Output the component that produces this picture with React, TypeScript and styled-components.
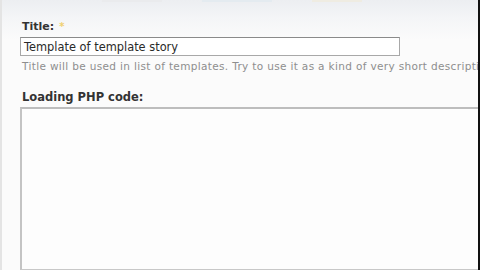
import React from "react";
import styled, { createGlobalStyle } from "styled-components";

const Global = createGlobalStyle`
  html, body { margin: 0; padding: 0; background: #fbfbfb; overflow: hidden; }
  * { box-sizing: border-box; }
`;

const Page = styled.div`
  width: 480px;
  height: 270px;
  overflow: hidden;
  display: flex;
  font-family: "DejaVu Sans", Verdana, sans-serif;
`;

const LeftEdge = styled.div`
  width: 2px;
  flex: none;
  background: #e4e4e4;
`;

const RightEdge = styled.div`
  width: 2px;
  flex: none;
  background: #111;
`;

const Content = styled.div`
  flex: 1;
  min-width: 0;
  overflow: hidden;
  background: linear-gradient(#eceef1 0px, #f4f5f7 18px, #fbfbfb 40px);
  display: flex;
  flex-direction: column;
`;

const TopStrip = styled.div`
  height: 5px;
  display: flex;
  gap: 40px;
  padding-left: 100px;
  flex: none;
`;

const TopMark = styled.div<{ $w: number; $tint: string }>`
  width: ${(p) => p.$w}px;
  height: 2px;
  background: ${(p) => p.$tint};
`;

const Form = styled.div`
  padding: 15px 0 0 18px;
  display: flex;
  flex-direction: column;
  flex: 1;
  min-height: 0;
`;

const Label = styled.label`
  font-size: 11px;
  font-weight: bold;
  color: #333;
  line-height: 14px;
  padding-left: 2px;
  display: flex;
  align-items: flex-start;
  gap: 5px;
`;

const WideLabel = styled(Label)`
  font-size: 11.5px;
`;

const Req = styled.span`
  color: #f0d070;
  font-size: 10px;
  font-weight: bold;
`;

const TextInput = styled.div`
  margin-top: 3px;
  width: 380px;
  height: 19px;
  border: 1px solid #a8a8a8;
  border-top-color: #8a8a8a;
  background: #fff;
  font-size: 11.4px;
  color: #2a2a2a;
  line-height: 18px;
  padding-left: 3px;
  white-space: nowrap;
`;

const Help = styled.div`
  margin-top: 4px;
  font-size: 10.5px;
  color: #8e8e8e;
  line-height: 12px;
  padding-left: 2px;
  white-space: nowrap;
  letter-spacing: 0.34px;
  overflow: hidden;
`;

const Spacer = styled.div<{ $h: number }>`
  height: ${(p) => p.$h}px;
  flex: none;
`;

const TextArea = styled.div`
  margin-top: 3px;
  flex: 1;
  margin-right: -10px;
  border: 1px solid #c8c8c8;
  border-top: 2px solid #bdbdbd;
  border-left: 2px solid #c4c4c4;
  background: #fdfdfd;
`;

export default function App() {
  return (
    <>
      <Global />
      <Page>
        <LeftEdge />
        <Content>
          <TopStrip>
            <TopMark $w={60} $tint="#eaebed" />
            <TopMark $w={70} $tint="#e4ebf0" />
            <TopMark $w={50} $tint="#efece2" />
          </TopStrip>
          <Form>
            <Label>
              Title: <Req>*</Req>
            </Label>
            <TextInput>Template of template story</TextInput>
            <Help>
              Title will be used in list of templates. Try to use it as a kind of very short descripti
            </Help>
            <Spacer $h={18} />
            <WideLabel>Loading PHP code:</WideLabel>
            <TextArea />
          </Form>
        </Content>
        <RightEdge />
      </Page>
    </>
  );
}
